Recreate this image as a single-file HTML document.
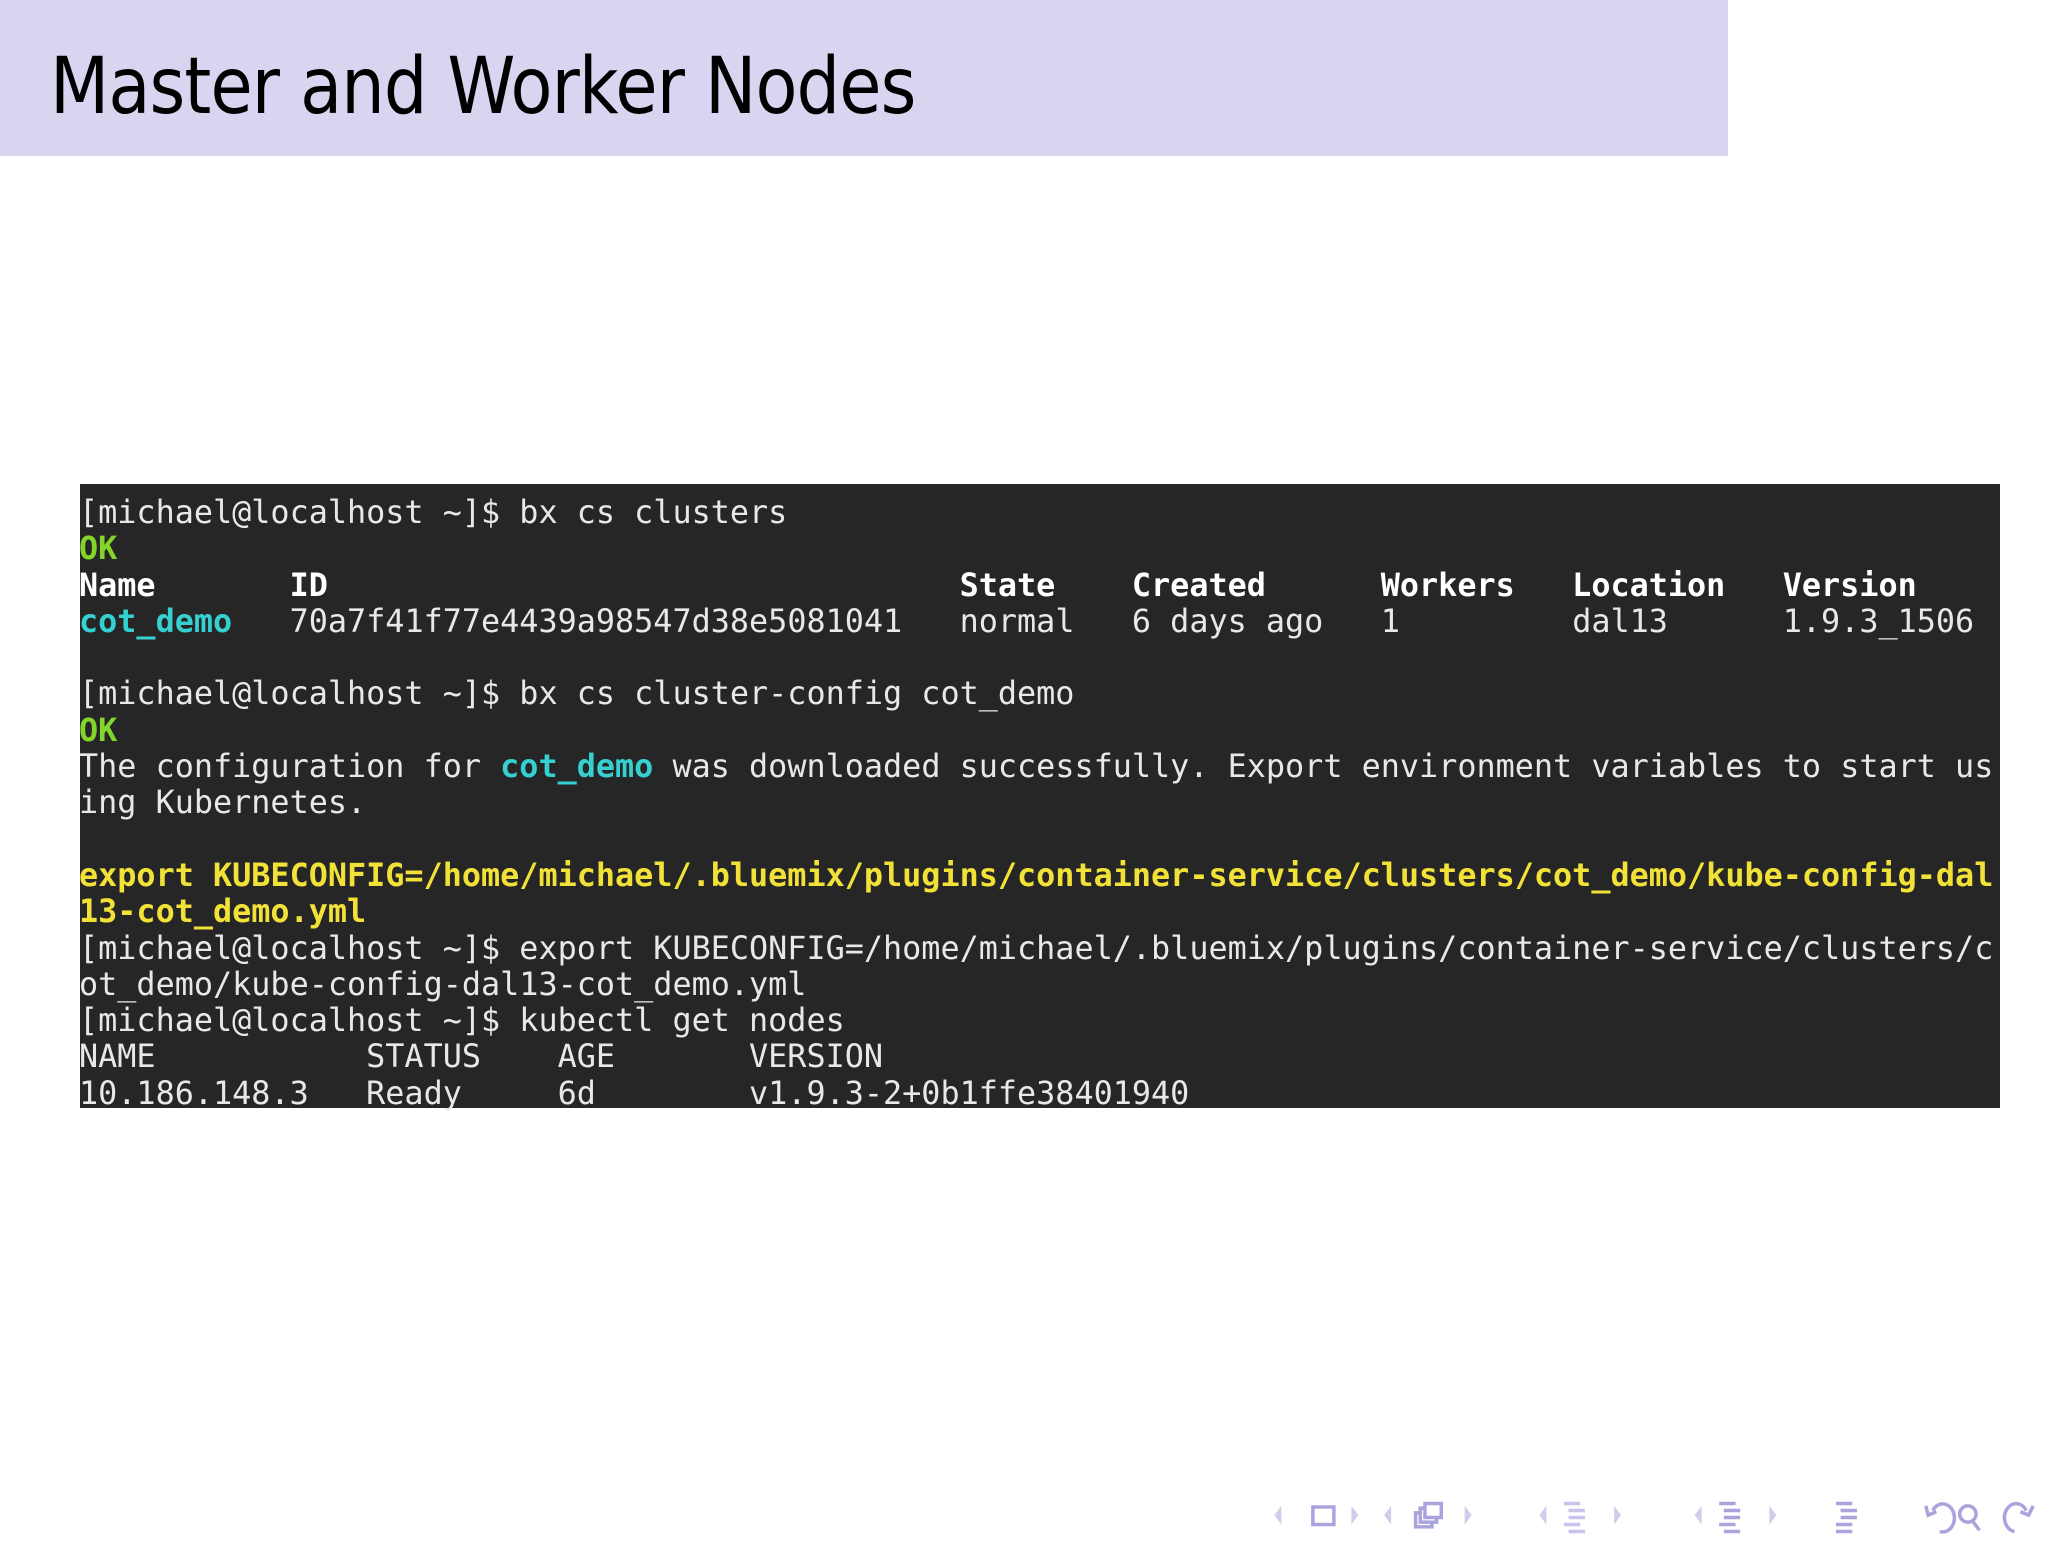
<!DOCTYPE html>
<html><head><meta charset="utf-8"><style>
body{margin:0;width:2048px;height:1536px;background:#fff;position:relative;overflow:hidden}
.bar{position:absolute;left:0;top:0;width:1728px;height:156px;background:#d8d5f0}
.title{position:absolute;left:50px;top:48px;font:78px/1 "DejaVu Sans","Liberation Sans",sans-serif;letter-spacing:-1px;transform:scaleX(0.88);transform-origin:left top;color:#000;white-space:nowrap}
.term{position:absolute;left:80px;top:484px;width:1920px;height:624px;background:#262627}
pre{position:absolute;left:79px;top:495px;margin:0;font:31.8px/36.3px "DejaVu Sans Mono","Liberation Mono",monospace;color:#e8e8e8}
.b{font-weight:bold;color:#fff}.g{font-weight:bold;color:#82d62a}.c{font-weight:bold;color:#35d0d0}.y{font-weight:bold;color:#f2e238}
.nav{position:absolute;left:1258px;top:1494px}
</style></head><body>
<div class="bar"></div>
<div class="title">Master and Worker Nodes</div>
<div class="term"></div>
<pre>[michael@localhost ~]$ bx cs clusters
<span class="g">OK</span>
<span class="b">Name       ID                                 State    Created      Workers   Location   Version</span>
<span class="c">cot_demo</span>   70a7f41f77e4439a98547d38e5081041   normal   6 days ago   1         dal13      1.9.3_1506

[michael@localhost ~]$ bx cs cluster-config cot_demo
<span class="g">OK</span>
The configuration for <span class="c">cot_demo</span> was downloaded successfully. Export environment variables to start us
ing Kubernetes.

<span class="y">export KUBECONFIG=/home/michael/.bluemix/plugins/container-service/clusters/cot_demo/kube-config-dal</span>
<span class="y">13-cot_demo.yml</span>
[michael@localhost ~]$ export KUBECONFIG=/home/michael/.bluemix/plugins/container-service/clusters/c
ot_demo/kube-config-dal13-cot_demo.yml
[michael@localhost ~]$ kubectl get nodes
NAME           STATUS    AGE       VERSION
10.186.148.3   Ready     6d        v1.9.3-2+0b1ffe38401940</pre>
<svg class="nav" width="920" height="47" viewBox="0 0 788 40" fill="none" stroke="#a9a4dc" stroke-width="3">
<path d="M20 10 L14 18 L20 26Z" fill="#d0cdec" stroke="none"/>
<rect x="47" y="11" width="18" height="15"/>
<path d="M80 10 L86 18 L80 26Z" fill="#d0cdec" stroke="none"/>
<path d="M114 10 L108 18 L114 26Z" fill="#d0cdec" stroke="none"/>
<rect x="135" y="16" width="14" height="12"/><rect x="139" y="12" width="14" height="12" fill="#fff"/><rect x="143" y="8" width="14" height="12" fill="#fff"/>
<path d="M177 10 L183 18 L177 26Z" fill="#d0cdec" stroke="none"/>
<path d="M247 10 L241 18 L247 26Z" fill="#d0cdec" stroke="none"/>
<path d="M262 8h14M266 14h14M266 20h14M262 26h14M266 32h14" stroke="#c7c3ea"/>
<path d="M305 10 L311 18 L305 26Z" fill="#d0cdec" stroke="none"/>
<path d="M380 10 L374 18 L380 26Z" fill="#d0cdec" stroke="none"/>
<path d="M395 8h14M399 14h14M399 20h14M395 26h14M399 32h14"/>
<path d="M438 10 L444 18 L438 26Z" fill="#d0cdec" stroke="none"/>
<path d="M495 8h14M499 14h14M499 20h14M495 26h14M495 32h14"/>
<path d="M578 14 a10 12 0 1 1 6 18 M572 10 l2 8 l7 -3"/>
<circle cx="608" cy="17" r="7"/><path d="M612 23 l6 8"/>
<path d="M648 32 a10 12 0 1 1 10 -18 M664 10 l-4 8 l-7 -3"/>
</svg>
</body></html>
